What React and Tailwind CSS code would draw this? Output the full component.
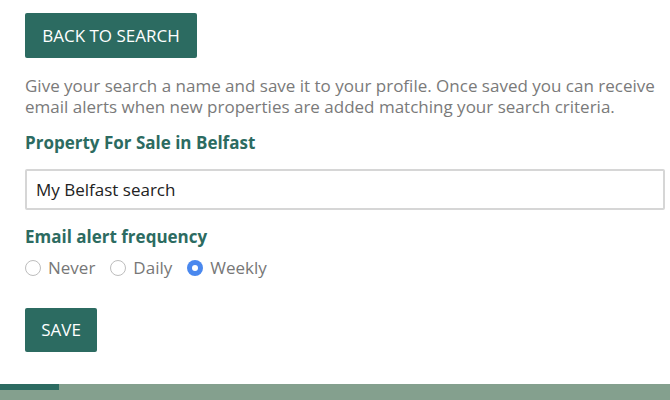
import { useState } from 'react'

export default function App() {
  const [name, setName] = useState('My Belfast search')
  const [freq, setFreq] = useState('weekly')

  const options = [
    { value: 'never', label: 'Never' },
    { value: 'daily', label: 'Daily' },
    { value: 'weekly', label: 'Weekly' },
  ]

  return (
    <main className="w-[670px] h-[400px] bg-white flex flex-col overflow-hidden font-['Open_Sans',sans-serif]">
      <div className="flex-1 pl-[25px] pr-[5px] pt-[13px]">
        {/* Back button */}
        <button className="h-[45px] w-[172px] rounded-[2px] bg-[#2c6b61] text-white text-[17px] flex items-center justify-center">
          BACK TO SEARCH
        </button>

        <p className="mt-[17px] text-[17px] leading-[21px] text-[#7a7a7a]">
          Give your search a name and save it to your profile. Once saved you can receive email alerts when new properties are added matching your search criteria.
        </p>

        <h2 className="mt-[15px] text-[17px] leading-[21px] font-bold text-[#2c6b61]">Property For Sale in Belfast</h2>

        {/* Name input */}
        <input
          value={name}
          onChange={e => setName(e.target.value)}
          className="mt-[16px] block w-[640px] h-[41px] border-2 border-[#d6d6d6] rounded-[2px] px-[9px] text-[17px] text-[#222] outline-none"
        />

        <h2 className="mt-[16px] text-[17px] leading-[21px] font-bold text-[#2c6b61]">Email alert frequency</h2>

        {/* Frequency radios */}
        <div className="mt-[10px] flex items-center gap-[15px]">
          {options.map(o => (
            <label key={o.value} className="flex items-center gap-[7px] cursor-pointer">
              <span
                onClick={() => setFreq(o.value)}
                className={`w-[16px] h-[16px] rounded-full flex items-center justify-center ${
                  freq === o.value ? 'bg-[#4a88ee]' : 'border border-[#bdbdbd] bg-white'
                }`}
              >
                {freq === o.value && <span className="w-[6px] h-[6px] rounded-full bg-white" />}
              </span>
              <span className="text-[17px] leading-[21px] text-[#777]">{o.label}</span>
            </label>
          ))}
        </div>

        <button className="mt-[30px] h-[44px] w-[72px] rounded-[2px] bg-[#2c6b61] text-white text-[17px] flex items-center justify-center">
          SAVE
        </button>
      </div>

      {/* Footer strip */}
      <div className="h-[16px] bg-[#84a08e] shrink-0">
        <div className="h-[6px] w-[59px] bg-[#2c6b61]" />
      </div>
    </main>
  )
}
